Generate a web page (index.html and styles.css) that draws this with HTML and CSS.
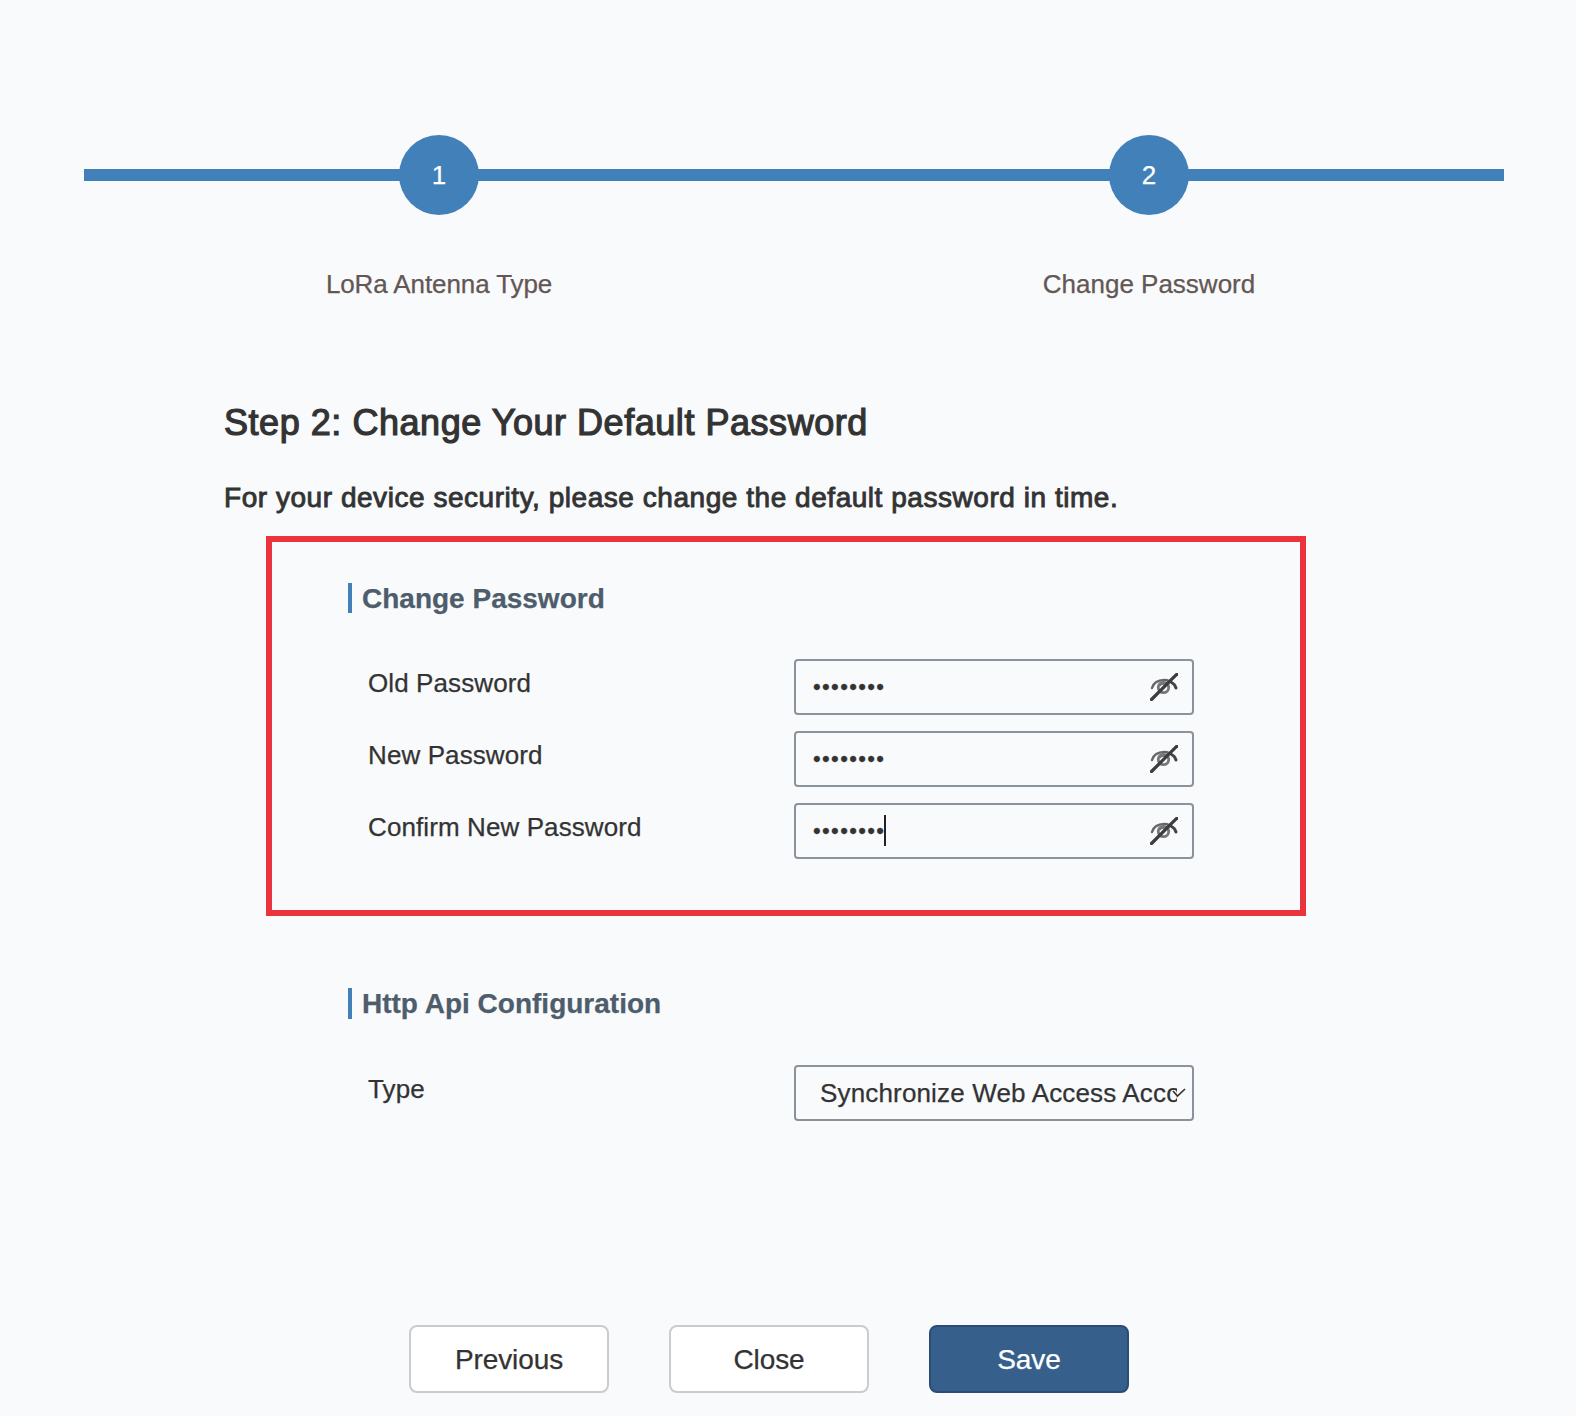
FILE: index.html
```
<!DOCTYPE html>
<html lang="en">

<head>
  <meta charset="UTF-8">
  <meta name="viewport" content="width=device-width, initial-scale=1.0">
  <title>Change Password</title>
  <link rel="stylesheet" href="styles.css">
</head>

<body>
  <svg class="defs" width="0" height="0">
    <symbol id="eye-off" viewBox="0 0 28 28">
      <g fill="none" stroke="#3c3d3e" stroke-linecap="round">
        <path d="M2 15C3 10.500 7.500 7 14 7c2 0 4 .3 5.500 1.200" stroke="#666" stroke-width="2.400"/>
        <path d="M21.500 9.500c2.400 1.200 3.800 3 4.500 5.500" stroke="#444" stroke-width="3"/>
        <circle cx="13.500" cy="14.500" r="5.200" stroke="#777" stroke-width="2.800"/>
        <path d="M10 12.500c1-1.500 3.500-2 5-1" stroke="#777" stroke-width="2"/>
        <path d="M1.500 26.500L27 1" stroke-width="3.200"/>
      </g>
    </symbol>
  </svg>

  <ul class="steps">
    <li class="step">
      <div class="step-line"><span class="step-num">1</span></div>
      <p class="step-name">LoRa Antenna Type</p>
    </li>
    <li class="step">
      <div class="step-line"><span class="step-num">2</span></div>
      <p class="step-name">Change Password</p>
    </li>
  </ul>

  <div class="content">
    <h1 class="title">Step 2: Change Your Default Password</h1>
    <p class="tip">For your device security, please change the default password in time.</p>

    <div class="section marked">
      <h2 class="section-title">Change Password</h2>
      <div class="row">
        <label class="label" for="old">Old Password</label>
        <div class="field">
          <input class="input" id="old" type="password" value="password">
          <svg class="eye"><use href="#eye-off"/></svg>
        </div>
      </div>
      <div class="row">
        <label class="label" for="new">New Password</label>
        <div class="field">
          <input class="input" id="new" type="password" value="password">
          <svg class="eye"><use href="#eye-off"/></svg>
        </div>
      </div>
      <div class="row">
        <label class="label" for="confirm">Confirm New Password</label>
        <div class="field">
          <input class="input" id="confirm" type="password" value="password">
          <span class="caret"></span>
          <svg class="eye"><use href="#eye-off"/></svg>
        </div>
      </div>
    </div>

    <div class="section">
      <h2 class="section-title">Http Api Configuration</h2>
      <div class="row">
        <span class="label">Type</span>
        <div class="field select">
          <span class="select-text">Synchronize Web Access Acco</span>
          <svg class="arrow" viewBox="0 0 14 10"><path d="M1 3l4.500 5L13 1" fill="none" stroke="#333" stroke-width="1.700"/></svg>
        </div>
      </div>
    </div>
  </div>

  <div class="buttons">
    <button class="btn">Previous</button>
    <button class="btn">Close</button>
    <button class="btn btn-save">Save</button>
  </div>
</body>

</html>
```
FILE: styles.css
```
* {
  margin: 0;
  padding: 0;
  box-sizing: border-box;
}

body {
  background-color: #f8fafc;
  color: #333;
  font-family: "Liberation Sans", Arial, sans-serif;
  font-size: 26px;
  height: 1416px;
  overflow: hidden;
  -webkit-text-stroke: 0.25px;
}

.defs {
  display: block;
}

/* steps */
.steps {
  display: flex;
  width: 1420px;
  margin-left: 84px;
  padding-top: 135px;
  list-style: none;
}

.step {
  flex: 1;
  text-align: center;
}

.step-line {
  display: flex;
  justify-content: center;
  height: 80px;
  background: linear-gradient(#4280b9, #4280b9) 0 34px / 100% 12px no-repeat;
}

.step-num {
  width: 80px;
  height: 80px;
  border-radius: 50%;
  background-color: #4280b9;
  color: #fff;
  line-height: 80px;
}

.step-name {
  margin-top: 49px;
  line-height: 40px;
  color: #635654;
}

.step:first-child .step-name {
  letter-spacing: -0.1px;
}

/* form */
.content {
  width: 1082px;
  margin: 99px 0 0 224px;
}

.title {
  font-size: 36px;
  font-weight: normal;
  line-height: 40px;
  letter-spacing: 0.54px;
  -webkit-text-stroke: 1.2px #333;
}

.tip {
  margin-top: 39px;
  font-size: 28px;
  line-height: 32px;
  letter-spacing: 0.54px;
  -webkit-text-stroke: 0.9px #333;
}

.section {
  margin-left: 42px;
  padding: 72px 0 0 82px;
}

.marked {
  height: 380px;
  margin-top: 22px;
  padding: 41px 0 0 76px;
  border: 6px solid #ea333d;
}

.section-title {
  height: 31px;
  padding-left: 10px;
  border-left: 4px solid #4280b9;
  font-size: 28px;
  line-height: 31px;
  color: #4e5d6b;
}

.marked .section-title {
  height: 30px;
}

.row {
  display: flex;
  margin: 0 0 16px 20px;
}

.section-title + .row {
  margin-top: 46px;
}

.label {
  width: 426px;
  line-height: 48px;
  letter-spacing: 0.1px;
}

.field {
  position: relative;
  width: 400px;
  height: 56px;
}

.input {
  width: 100%;
  height: 100%;
  padding: 0 60px 0 17px;
  border: 2px solid #8a939b;
  border-radius: 4px;
  background: transparent;
  font-family: inherit;
  font-size: 22px;
  letter-spacing: 1.35px;
  color: #333;
  outline: none;
}

.caret {
  position: absolute;
  left: 90px;
  top: 12px;
  width: 2px;
  height: 31px;
  background-color: #222;
}

.eye {
  position: absolute;
  right: 16px;
  top: 14px;
  width: 28px;
  height: 28px;
}

.select {
  padding-left: 24px;
  border: 2px solid #8a939b;
  border-radius: 4px;
}

/* long option is cut before the arrow */
.select-text {
  display: block;
  width: 357px;
  overflow: hidden;
  white-space: nowrap;
  line-height: 52px;
  letter-spacing: 0.16px;
}

.arrow {
  position: absolute;
  right: 6px;
  top: 21px;
  width: 14px;
  height: 10px;
}

/* buttons */
.buttons {
  display: flex;
  gap: 60px;
  margin: 204px 0 0 409px;
}

.btn {
  width: 200px;
  height: 68px;
  padding-top: 1px;
  border: 2px solid #ccc;
  border-radius: 8px;
  background-color: #fff;
  font-family: inherit;
  font-size: 28px;
  letter-spacing: -0.1px;
  color: #333;
}

.btn-save {
  border-color: #2b4d75;
  background-color: #365f8b;
  color: #fff;
}
```
